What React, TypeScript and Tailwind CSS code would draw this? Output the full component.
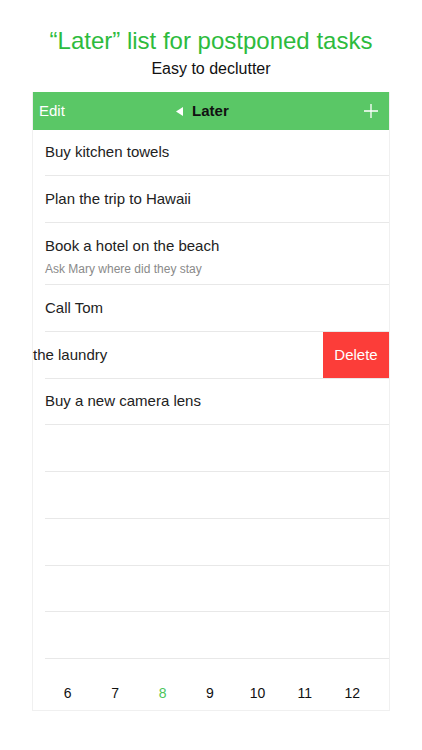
const rows = [
  { title: 'Buy kitchen towels', h: 'h-[46px]' },
  { title: 'Plan the trip to Hawaii', h: 'h-[47px]' },
]

const days = [6, 7, 8, 9, 10, 11, 12]

function Row({ children, className = '' }: { children?: React.ReactNode; className?: string }) {
  return (
    <div className={`ml-[12px] border-b border-[#e8e8e8] flex items-center text-[15px] text-[#222] ${className}`}>
      {children}
    </div>
  )
}

export default function App() {
  return (
    <div className="w-[422px] h-[750px] bg-white overflow-hidden" style={{ fontFamily: '"Liberation Sans", Arial, sans-serif' }}>
      <div className="pt-[27px] text-center">
        <div className="text-[24px] leading-[28px] text-[#2dbb3d]">“Later” list for postponed tasks</div>
        <div className="mt-[4px] text-[16px] leading-[20px] text-[#111]">Easy to declutter</div>
      </div>

      <div className="mx-auto mt-[13px] w-[358px] border-x border-b border-[#f0f0f0]">
        <div className="h-[38px] bg-[#5ac766] flex items-center px-[6px] text-[15px] relative">
          <span className="text-white">Edit</span>
          <div className="flex-1 flex items-center justify-center gap-[9px] pr-[24px]">
            <svg width="7" height="9" viewBox="0 0 7 9"><path d="M7 0 L0 4.5 L7 9 Z" fill="#fff" /></svg>
            <span className="font-bold text-[#111]">Later</span>
          </div>
          <svg width="14" height="14" viewBox="0 0 14 14" className="mr-[5px]">
            <path d="M7 0 V14 M0 7 H14" stroke="#fff" strokeWidth="1.3" />
          </svg>
        </div>

        {rows.map((r) => (
          <Row key={r.title} className={r.h}>{r.title}</Row>
        ))}
        <Row className="h-[62px] flex-col !items-start justify-start">
          <div className="pt-[14px] leading-[18px]">Book a hotel on the beach</div>
          <div className="mt-[8px] text-[12px] leading-[13px] text-[#8a8a8a]">Ask Mary where did they stay</div>
        </Row>
        <Row className="h-[47px]">Call Tom</Row>
        <div className="h-[47px] flex items-stretch relative">
          <div className="flex-1 flex items-center text-[15px] text-[#222]">the laundry</div>
          <div className="w-[66px] bg-[#fc3d39] text-white text-[15px] flex items-center justify-center">Delete</div>
          <div className="absolute left-[12px] right-0 bottom-0 h-px bg-[#e8e8e8]" />
        </div>
        <Row className="h-[46px]">Buy a new camera lens</Row>
        <Row className="h-[47px]" />
        <Row className="h-[47px]" />
        <Row className="h-[47px]" />
        <Row className="h-[46px]" />
        <Row className="h-[47px]" />

        <div className="h-[51px] grid grid-cols-7 pl-[11px] pr-[13px] pt-[24px] text-[14px] leading-[20px] text-[#111]">
          {days.map((d) => (
            <div key={d} className={`text-center ${d === 8 ? 'text-[#4cc55a]' : ''}`}>{d}</div>
          ))}
        </div>
      </div>
    </div>
  )
}
